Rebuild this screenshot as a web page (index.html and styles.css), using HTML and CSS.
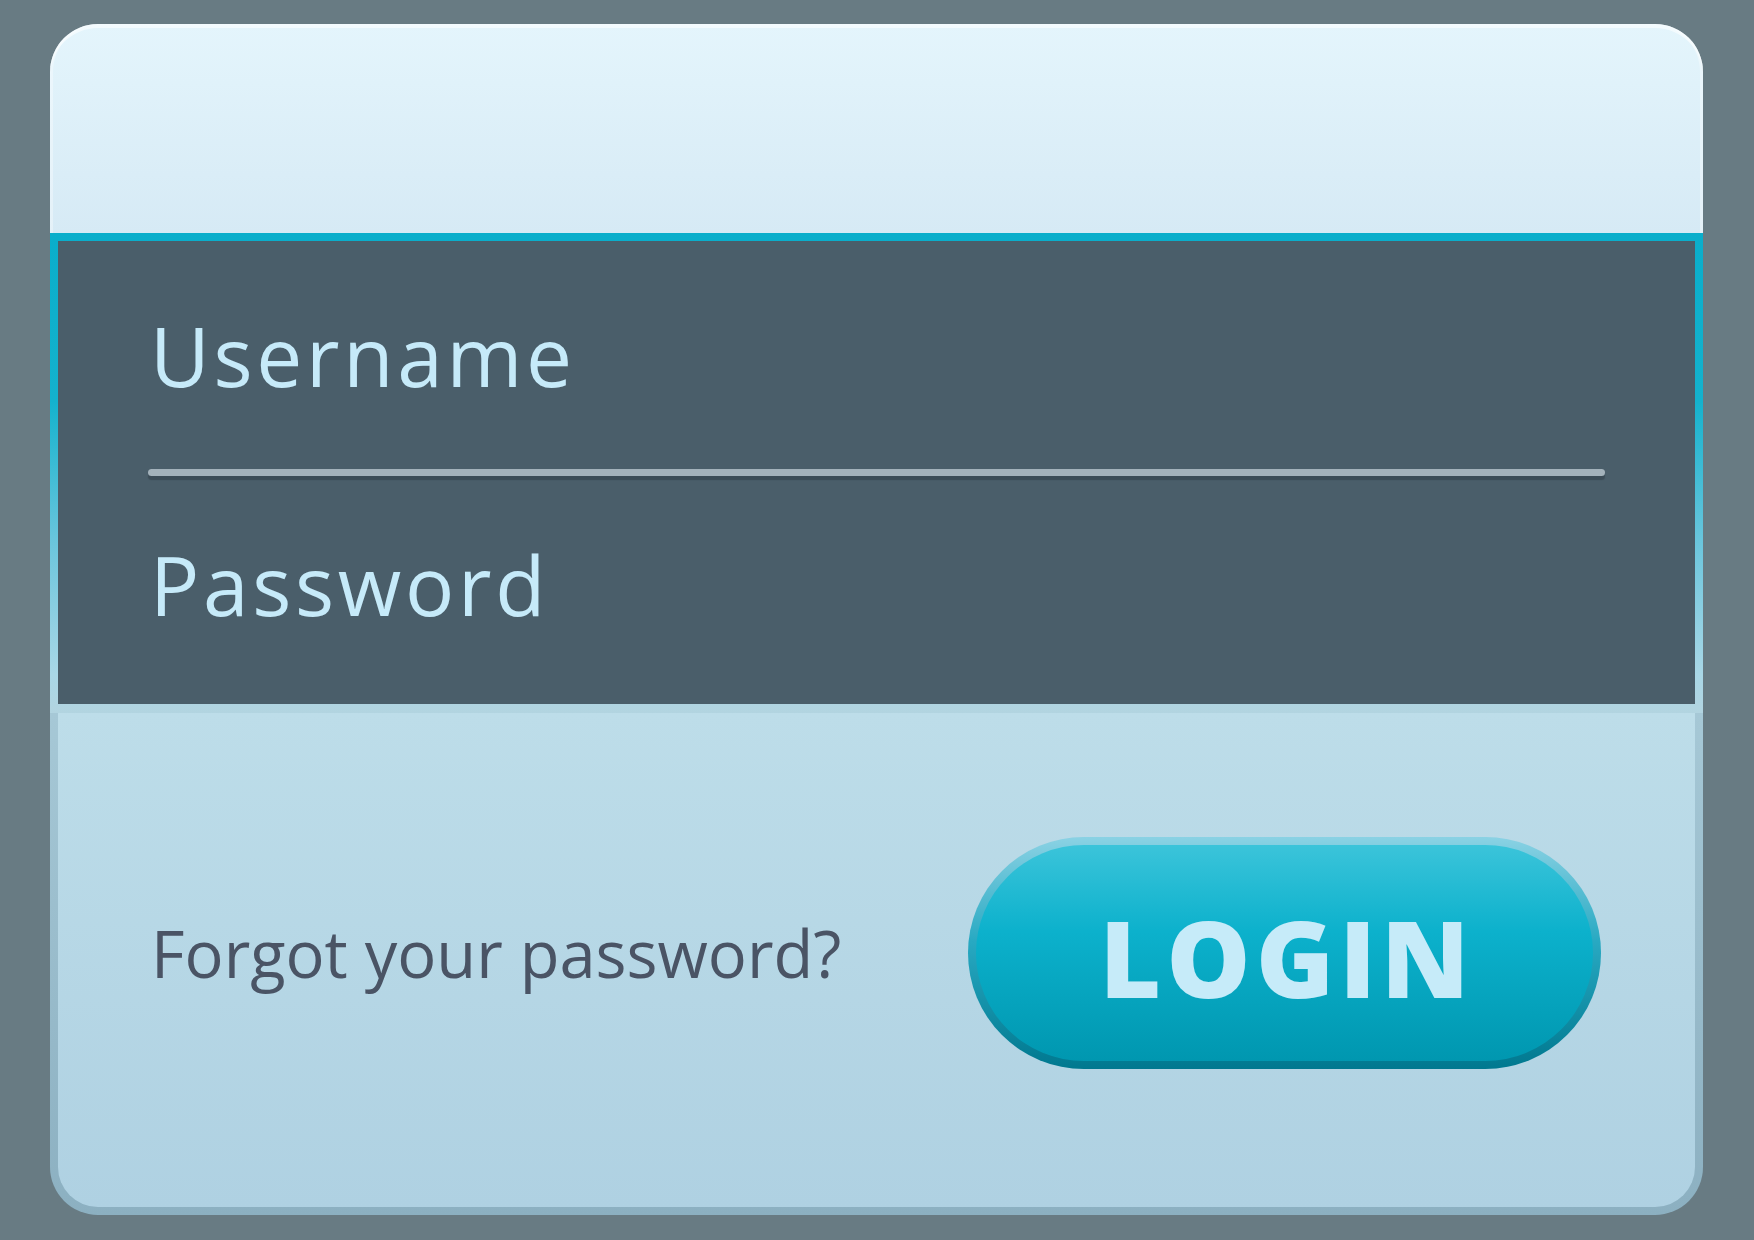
FILE: index.html
```html
<!DOCTYPE html>
<html lang="en">
<head>
<meta charset="utf-8">
<title>Login</title>
<link rel="stylesheet" href="styles.css">
</head>
<body>
<div class="card">
  <div class="card-top"></div>
  <div class="fields">
    <div class="field">Username</div>
    <div class="divider"></div>
    <div class="field">Password</div>
  </div>
  <div class="card-bottom">
    <a class="forgot">Forgot your password?</a>
    <button class="login">LOGIN</button>
  </div>
</div>
</body>
</html>
```
FILE: styles.css
```css
* { box-sizing: border-box; }
html, body { margin: 0; padding: 0; }
body {
  width: 1754px;
  height: 1240px;
  background: #687b83;
  font-family: "Open Sans", "Noto Sans", sans-serif;
  padding: 24px 51px 25px 50px;
}
.card {
  width: 1653px;
  height: 1191px;
  display: flex;
  flex-direction: column;
}
.card-top {
  height: 209px;
  border-radius: 48px 48px 0 0;
  background: linear-gradient(#e4f5fc, #d6eaf5);
  box-shadow: inset 0 4px 0 rgba(255,255,255,0.55), inset 3px 0 0 rgba(255,255,255,0.35), inset -3px 0 0 rgba(255,255,255,0.35);
}
.fields {
  height: 480px;
  border: 8px solid transparent;
  border-bottom-width: 9px;
  background:
    linear-gradient(#4a5e6a, #4a5e6a) padding-box,
    linear-gradient(#0aaecb 0%, #14b2cd 35%, #6cc6dd 65%, #a9d7e6 92%, #b2d4e0 100%) border-box;
  padding: 73px 90px 79px 92px;
  display: flex;
  flex-direction: column;
}
.field {
  font-size: 82px;
  line-height: 82px;
  height: 82px;
  letter-spacing: 3.7px;
  color: #c6eaf9;
}
.divider {
  margin: 73px 0 67px -2px;
  height: 7px;
  width: 1457px;
  border-radius: 4px;
  background: #a3b2bb;
  box-shadow: 0 4px 1px #3b4c57;
}
.card-bottom {
  flex: 1;
  border: 8px solid transparent;
  border-top: 0;
  border-radius: 0 0 48px 48px;
  background:
    linear-gradient(#bddde9, #afd1e2) padding-box,
    linear-gradient(#a6c8d6, #8cb0c1) border-box;
  padding: 124px 94px 138px 93px;
  display: flex;
  align-items: center;
  justify-content: space-between;
}
.forgot {
  font-size: 65px;
  line-height: 65px;
  color: #4a5465;
}
.login {
  width: 633px;
  height: 232px;
  border-radius: 116px;
  border: 8px solid transparent;
  background:
    linear-gradient(#3bc4da 0%, #0cb1cc 40%, #0097b0 100%) padding-box,
    linear-gradient(#8ad2e4 0%, #28a9c2 45%, #00788f 100%) border-box;
  font-family: "Open Sans", sans-serif;
  font-weight: 800;
  font-size: 106px;
  line-height: 106px;
  letter-spacing: 5px;
  color: #c6ebf9;
  padding: 7px 0 0 5px;
  cursor: pointer;
}
```
